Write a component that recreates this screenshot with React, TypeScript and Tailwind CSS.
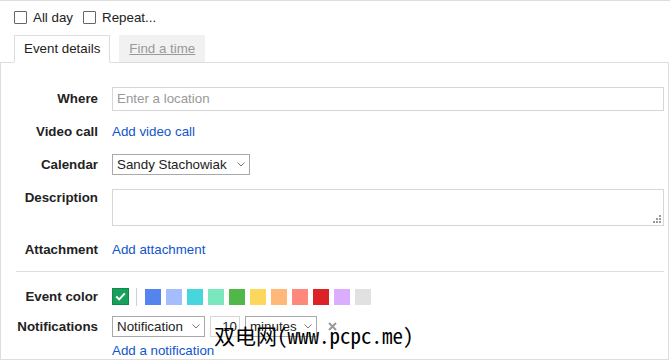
import React from "react";

const COLORS = [
  "#5484ed",
  "#a4bdfc",
  "#46d6db",
  "#7ae7bf",
  "#51b749",
  "#fbd75b",
  "#ffb878",
  "#ff887c",
  "#dc2127",
  "#dbadff",
  "#e1e1e1",
];

function Chevron() {
  return (
    <svg width="8" height="5" viewBox="0 0 8 5" className="shrink-0">
      <path d="M0.5 0.5 L4 4 L7.5 0.5" fill="none" stroke="#777" strokeWidth="1" />
    </svg>
  );
}

function FakeSelect({ value, width }: { value: string; width: string }) {
  return (
    <div
      className={`${width} h-full flex items-center justify-between border border-[#a9a9a9] bg-white pl-[4px] pr-[4px]`}
    >
      <span className="leading-none">{value}</span>
      <Chevron />
    </div>
  );
}

function Checkbox({ label }: { label: string }) {
  return (
    <label className="flex items-center gap-[6px]">
      <span className="w-[13px] h-[13px] border border-[#666] rounded-[1px] bg-white" />
      <span>{label}</span>
    </label>
  );
}

function Row({
  label,
  className,
  top,
  children,
}: {
  label: string;
  className: string;
  top?: boolean;
  children?: React.ReactNode;
}) {
  return (
    <div className={`flex ${top ? "items-start" : "items-center"} ${className}`}>
      <div className={`w-[97px] shrink-0 text-right font-bold text-[#222] ${top ? "-mt-[1px]" : ""}`}>
        {label}
      </div>
      <div className="ml-[14px] flex-1 h-full flex items-center pr-[4px]">{children}</div>
    </div>
  );
}

function ResizeGrip() {
  const dots = [
    [8, 0],
    [8, 3],
    [5, 3],
    [8, 6],
    [5, 6],
    [2, 6],
  ];
  return (
    <svg width="10" height="8" viewBox="0 0 10 8" className="absolute right-[2px] bottom-[2px]">
      {dots.map(([x, y], i) => (
        <rect key={i} x={x} y={y} width="2" height="2" fill="#9a9a9a" />
      ))}
    </svg>
  );
}

export default function App() {
  return (
    <div className="relative w-[670px] h-[361px] bg-white text-[13.33px] text-[#222] font-['Liberation_Sans',Arial,sans-serif] overflow-hidden">
      <div className="h-[35px] border-t border-[#ddd] flex items-center pl-[14px] gap-[10px]">
        <Checkbox label="All day" />
        <Checkbox label="Repeat..." />
      </div>

      <div className="h-[28px] w-[669px] border-b border-[#ddd] flex items-end pl-[14px] gap-[9px]">
        <div className="h-[28px] -mb-px px-[9px] flex items-center border border-[#ddd] border-b-white bg-white">
          Event details
        </div>
        <div className="h-[27px] px-[10px] flex items-center bg-[#f1f1f1] text-[#999] underline decoration-[#999]">
          Find a time
        </div>
      </div>

      <div className="flow-root w-[669px] h-[297px] border-l border-r border-b border-[#ddd]">
        <Row label="Where" className="mt-[24px] h-[24px]">
          <div className="w-full h-full border border-[#d6d6d6] flex items-center pl-[4px] text-[#999]">
            Enter a location
          </div>
        </Row>

        <Row label="Video call" className="mt-[11px] h-[20px]">
          <a className="text-[#1155cc]">Add video call</a>
        </Row>

        <Row label="Calendar" className="mt-[12px] h-[21px]">
          <FakeSelect value="Sandy Stachowiak" width="w-[138px]" />
        </Row>

        <Row label="Description" className="mt-[14px] h-[37px]" top>
          <div className="relative w-full h-full border border-[#d6d6d6]">
            <ResizeGrip />
          </div>
        </Row>

        <Row label="Attachment" className="mt-[14px] h-[20px]">
          <a className="text-[#1155cc]">Add attachment</a>
        </Row>

        <div className="mt-[11px] ml-[15px] mr-[4px] h-px bg-[#ddd]" />

        <Row label="Event color" className="mt-[16px] h-[17px]">
          <div className="flex items-center h-full">
            <div className="w-[17px] h-[17px] bg-[#16a05a] border border-[#0f8a4c] flex items-center justify-center">
              <svg width="11" height="9" viewBox="0 0 11 9">
                <path d="M1.2 4.6 L4.2 7.4 L9.8 1.4" fill="none" stroke="#fff" strokeWidth="2" />
              </svg>
            </div>
            <div className="ml-[7px] w-px h-[18px] bg-[#d0d0d0]" />
            <div className="ml-[8px] flex gap-[5px]">
              {COLORS.map((c) => (
                <div key={c} className="w-[16px] h-[16px]" style={{ backgroundColor: c }} />
              ))}
            </div>
          </div>
        </Row>

        <Row label="Notifications" className="mt-[11px] h-[21px]">
          <div className="flex items-center h-full">
            <FakeSelect value="Notification" width="w-[93px]" />
            <div className="ml-[5px] w-[30px] h-full border border-[#d6d6d6] flex items-center justify-end pr-[2px] leading-none">
              10
            </div>
            <div className="ml-[5px] h-full flex">
              <FakeSelect value="minutes" width="w-[72px]" />
            </div>
            <svg width="9" height="9" viewBox="0 0 9 9" className="ml-[11px]">
              <path d="M1 1 L8 8 M8 1 L1 8" stroke="#9a9a9a" strokeWidth="2" />
            </svg>
          </div>
        </Row>

        <div className="mt-[6px] h-[16px] pl-[111px] flex items-center">
          <a className="text-[#1155cc]">Add a notification</a>
        </div>
      </div>

      <div className="absolute left-[214px] top-[325px] text-[21px] leading-none text-black font-['Noto_Sans_Mono_CJK_SC','Noto_Sans_CJK_SC',monospace] whitespace-nowrap">
        双电网(www.pcpc.me)
      </div>
    </div>
  );
}
